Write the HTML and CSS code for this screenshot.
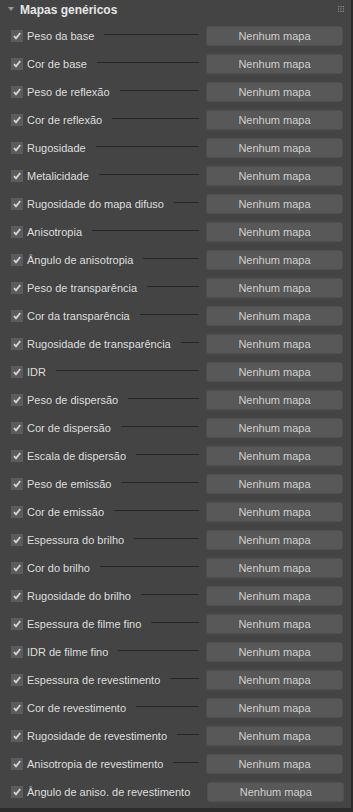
FILE: index.html
```html
<!DOCTYPE html>
<html lang="pt">
    <head>
        <meta charset="UTF-8"><meta name="viewport" content="width=device-width, initial-scale=1.0"><title>Mapas genéricos</title>
        <link rel="stylesheet" href="styles.css">
    </head>
    <body>
        <div class="panel">
            <div class="panel_header">
                <span class="arrow"></span>
                <span class="title">Mapas genéricos</span>
                <svg class="grip" width="6" height="6" viewBox="0 0 6 6">
                    <rect x="0" y="0" width="1.2" height="1.2" fill="#8c8c8c"/><rect x="2.4" y="0" width="1.2" height="1.2" fill="#8c8c8c"/><rect x="4.8" y="0" width="1.2" height="1.2" fill="#8c8c8c"/>
                    <rect x="0" y="2.4" width="1.2" height="1.2" fill="#8c8c8c"/><rect x="2.4" y="2.4" width="1.2" height="1.2" fill="#8c8c8c"/><rect x="4.8" y="2.4" width="1.2" height="1.2" fill="#8c8c8c"/>
                    <rect x="0" y="4.8" width="1.2" height="1.2" fill="#8c8c8c"/><rect x="2.4" y="4.8" width="1.2" height="1.2" fill="#8c8c8c"/><rect x="4.8" y="4.8" width="1.2" height="1.2" fill="#8c8c8c"/>
                </svg>
            </div>
            <div class="map_list" id="mapList"></div>
        </div>

        <script>
            // list of map slots, all unassigned
            var maps = [
                "Peso da base", "Cor de base", "Peso de reflexão", "Cor de reflexão",
                "Rugosidade", "Metalicidade", "Rugosidade do mapa difuso", "Anisotropia",
                "Ângulo de anisotropia", "Peso de transparência", "Cor da transparência",
                "Rugosidade de transparência", "IDR", "Peso de dispersão", "Cor de dispersão",
                "Escala de dispersão", "Peso de emissão", "Cor de emissão", "Espessura do brilho",
                "Cor do brilho", "Rugosidade do brilho", "Espessura de filme fino", "IDR de filme fino",
                "Espessura de revestimento", "Cor de revestimento", "Rugosidade de revestimento",
                "Anisotropia de revestimento", "Ângulo de aniso. de revestimento"
            ];
            var list = document.getElementById('mapList');
            maps.forEach(function(name) {
                var row = document.createElement('div');
                row.className = 'map_row';
                row.innerHTML =
                    '<span class="check"><svg width="12" height="12" viewBox="0 0 12 12"><path d="M3 6.2 L5 8.4 L9.2 3" stroke="#d4d4d4" stroke-width="1.8" fill="none"/></svg></span>' +
                    '<span class="label"></span>' +
                    '<span class="rule"></span>' +
                    '<button class="map_button">Nenhum mapa</button>';
                row.querySelector('.label').textContent = name;
                list.appendChild(row);
            });
        </script>
    </body>
</html>
```
FILE: styles.css
```css
body {
    margin: 0;
    background-color: #2c2c2c;
    font-family: "Liberation Sans", Arial, sans-serif;
}
.panel {
    width: 351px;
    height: 808px;
    background-color: #444444;
    box-sizing: border-box;
    padding: 0 8px 0 11px;
}
.panel_header {
    display: flex;
    align-items: center;
    height: 20px;
    padding-bottom: 2px;
    position: relative;
}
.arrow {
    width: 0;
    height: 0;
    border-left: 3px solid transparent;
    border-right: 3px solid transparent;
    border-top: 4px solid #9a9a9a;
    margin-left: -3px;
    margin-right: 6px;
    margin-top: -3px;
}
.title {
    color: #e6e6e6;
    font-weight: bold;
    font-size: 12px;
}
.grip {
    position: absolute;
    right: -1px;
    top: 6px;
}
.map_row {
    display: flex;
    align-items: center;
    height: 28px;
}
.check {
    width: 12px;
    height: 12px;
    background-color: #5c5c5c;
    flex: none;
}
.check svg {
    display: block;
}
.label {
    color: #dedede;
    font-size: 11px;
    margin-left: 4px;
    white-space: nowrap;
}
.rule {
    flex: 1;
    height: 1px;
    background-color: #262626;
    margin: 0 7px 4px 10px;
}
.map_button {
    width: 137px;
    height: 20px;
    flex: none;
    background-color: #585858;
    border: 1px solid #505050;
    border-radius: 3px;
    color: #cfcfcf;
    font-family: "Liberation Sans", Arial, sans-serif;
    font-size: 11px;
    padding: 0;
}
```
